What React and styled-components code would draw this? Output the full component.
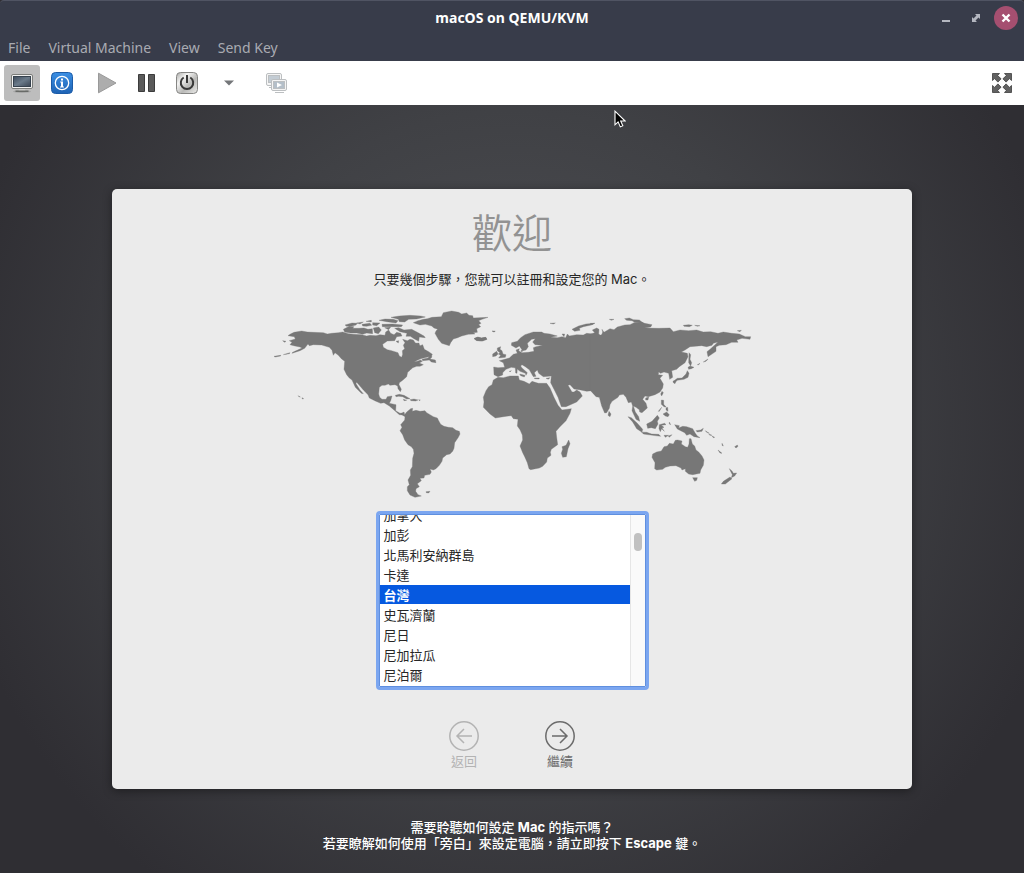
import React, { useLayoutEffect, useRef, useState } from "react";
import styled, { createGlobalStyle, css } from "styled-components";

const regions = [
  "加拿大",
  "加彭",
  "北馬利安納群島",
  "卡達",
  "台灣",
  "史瓦濟蘭",
  "尼日",
  "尼加拉瓜",
  "尼泊爾",
];

const menus = ["File", "Virtual Machine", "View", "Send Key"];

const MonitorIcon = () => (
  <svg width="24" height="24" viewBox="0 0 24 24">
    <defs>
      <linearGradient id="screen" x1="0" y1="0" x2="1" y2="1">
        <stop offset="0" stopColor="#3d4a5a" />
        <stop offset=".5" stopColor="#6b7b8a" />
        <stop offset="1" stopColor="#3b4654" />
      </linearGradient>
    </defs>
    <ellipse cx="12" cy="20.500" rx="9" ry="1.500" fill="#a5a5a5" />
    <rect x="1.500" y="3.500" width="21" height="14" rx="1.500" fill="#f1f1f0" stroke="#7b7d7a" />
    <rect x="3.500" y="5.500" width="17" height="10" fill="url(#screen)" stroke="#36424e" />
    <path d="M9 18h6l.5 2h-7z" fill="#c9cac8" />
    <path d="M5.500 19.500h13v1.500h-13z" fill="#686a67" />
  </svg>
);

const InfoIcon = () => (
  <svg width="24" height="24" viewBox="0 0 24 24">
    <defs>
      <linearGradient id="info" x1="0" y1="0" x2="0" y2="1">
        <stop offset="0" stopColor="#3b8fe4" />
        <stop offset="1" stopColor="#1e63b4" />
      </linearGradient>
    </defs>
    <rect x="1.500" y="1.500" width="21" height="21" rx="4" fill="url(#info)" stroke="#1c5ca8" />
    <circle cx="12" cy="12" r="6.700" fill="none" stroke="#fff" strokeWidth="1.300" />
    <path d="M11 7.500h2v2h-2zM10.200 10.500H13v5h1v1h-4v-1h1v-4h-.8z" fill="#fff" />
  </svg>
);

const PlayIcon = () => (
  <svg width="24" height="24" viewBox="0 0 24 24">
    <path d="M3.500 2.200 21 12 3.500 21.800z" fill="#adadad" stroke="#999" />
  </svg>
);

const PauseIcon = () => (
  <svg width="24" height="24" viewBox="0 0 24 24">
    <g fill="#5a5a5a" stroke="#3c3c3c">
      <path d="M3.500 3.500h6v17h-6zM13.500 3.500h6v17h-6z" />
    </g>
  </svg>
);

const PowerIcon = () => (
  <svg width="24" height="24" viewBox="0 0 24 24">
    <defs>
      <linearGradient id="metal" x1="0" y1="0" x2="1" y2="1">
        <stop offset="0" stopColor="#a9a9a7" />
        <stop offset=".3" stopColor="#f4f4f3" />
        <stop offset=".6" stopColor="#b9b9b7" />
        <stop offset="1" stopColor="#ececea" />
      </linearGradient>
    </defs>
    <rect x="1.500" y="1.500" width="21" height="21" rx="4" fill="url(#metal)" stroke="#868684" />
    <path d="M8.700 6.500A6.200 6.200 0 1 0 15.300 6.500" fill="none" stroke="#383838" strokeWidth="2" />
    <path d="M12 4v8" stroke="#383838" strokeWidth="2" />
  </svg>
);

const CaretIcon = () => (
  <svg width="10" height="6" viewBox="0 0 10 6">
    <path d="M0 .5h10L5 5.500z" fill="#747679" />
  </svg>
);

const ConsolesIcon = () => (
  <svg width="24" height="24" viewBox="0 0 24 24">
    <g stroke="#bcbfc1">
      <rect x="2.500" y="2.500" width="15" height="12" rx="1.500" fill="#f5f5f5" />
      <rect x="4.500" y="4.500" width="11" height="7" fill="#c3ccd4" />
      <path d="M5 16.500h5" />
      <rect x="7.500" y="8.500" width="15" height="11" rx="1.500" fill="#f5f5f5" />
      <rect x="9.500" y="10.500" width="11" height="7" fill="#b4bfc9" />
      <path d="M11 21.500h9" />
    </g>
    <path d="m13 11.500 5 2.500-5 2.500z" fill="#fff" />
  </svg>
);

const FullscreenIcon = () => (
  <svg width="24" height="24" viewBox="0 0 24 24">
    <defs>
      <path
        id="corner"
        d="M2.500 2.500h7L7.600 4.600l3.500 3.200-3.200 3.300-3.300-3.500-2.100 1.900z"
        fill="#626262"
        stroke="#3d3d3d"
        strokeWidth=".8"
      />
    </defs>
    <use href="#corner" />
    <use href="#corner" transform="matrix(-1 0 0 1 24 0)" />
    <use href="#corner" transform="matrix(1 0 0 -1 0 24)" />
    <use href="#corner" transform="matrix(-1 0 0 -1 24 24)" />
  </svg>
);

const PointerIcon = () => (
  <svg width="12" height="19" viewBox="0 0 12 19">
    <path
      d="M1 1.200v13.600l3.100-2.900 2.200 5 2.500-1.100-2.100-4.800h4.400z"
      fill="#000"
      stroke="#fff"
      strokeWidth="1.100"
    />
  </svg>
);

const ArrowIcon = ({ back }) => (
  <svg width="30" height="30" viewBox="0 0 30 30" fill="none" stroke="currentColor">
    <circle cx="15" cy="15" r="14.200" strokeWidth="1.500" />
    <path
      d={back ? "M23 15H8M15 8l-7 7 7 7" : "M7 15h15M15 8l7 7-7 7"}
      strokeWidth="1.500"
    />
  </svg>
);

const WorldMap = () => (
  <MapSvg viewBox="-18 0 1488 600" role="img" aria-hidden="true">
    {/* North and Central America */}
    <path d="M60 103 72 97 95 93 112 96 130 97 160 98 172 102 185 100 205 98 218 96 235 101 250 103 275 104 290 108 300 106 318 107 330 104 345 106 347 96 356 90 362 100 372 104 380 97 392 100 396 108 380 110 374 122 352 123 338 133 340 142 352 149 365 152 384 158 388 168 395 172 398 163 397 152 404 146 400 136 405 128 398 118 412 122 420 118 430 120 436 129 450 137 458 134 463 148 476 155 487 163 484 169 470 172 452 176 432 185 442 184 452 180 457 184 448 189 460 194 450 199 440 199 428 203 420 211 413 217 410 230 398 241 388 248 387 254 394 268 391 275 384 266 383 258 375 254 360 256 355 252 345 256 336 256 328 262 326 282 329 292 336 298 348 298 352 290 366 288 362 302 358 310 378 314 377 332 390 340 402 338 401 345 388 344 372 330 358 318 342 308 332 310 316 303 298 294 294 284 280 270 268 256 260 247 258 251 270 270 280 281 274 280 256 262 246 240 238 234 230 224 222 208 224 184 214 176 205 166 195 158 190 166 186 151 178 142 155 135 130 134 118 137 114 132 104 145 90 152 66 160 68 157 96 144 90 141 75 138 60 134 66 127 58 122 76 117 73 110 54 107z" />
    <path d="M12 169 32 166 32 168 15 171zM40 164 60 158 58 161zM38 122 48 124 44 127zM84 287 91 291 88 291zM96 293 101 296 97 297z" />
    {/* Canadian arctic */}
    <path d="M220 88 238 79 252 80 248 85 266 85 282 84 294 88 307 86 308 101 290 99 278 103 260 99 242 99 224 96zM225 75 246 69 262 70 258 75 246 78 230 79zM260 69 280 66 270 72zM276 73 300 70 305 76 290 79 278 78zM288 64 304 61 304 66zM308 68 330 69 320 77 308 75zM310 84 326 81 334 90 325 101 314 98zM327 61 345 57 370 58 384 62 378 69 350 65zM336 73 368 72 398 75 394 80 360 80 337 80zM344 83 362 81 356 89zM363 52 388 48 420 46 452 48 466 51 440 57 416 58 404 66 388 65 385 58zM374 85 386 83 402 90 425 88 442 97 462 108 466 113 448 111 446 124 432 116 421 109 408 109 411 100 390 95zM435 130 447 129 449 137 441 139zM378 124 386 122 385 129z" />
    <path d="M456 178 474 174 482 164 486 171 480 177 496 180 498 188 484 186 478 180 458 182zM376 286 388 283 402 286 420 296 410 297 398 290 386 289 378 290zM420 299 432 297 444 300 437 303 423 302zM400 298 410 301 402 302zM446 299 451 300 448 302z" />
    <g transform="translate(360 0)">
      <path d="M70 68 84 62 100 58 112 56 126 52 154 50 160 38 185 33 206 37 215 42 230 39 237 46 248 47 250 54 294 52 276 58 266 62 273 70 266 74 272 80 260 86 262 97 250 98 255 102 235 103 215 108 203 113 190 117 182 128 178 137 155 130 145 118 135 100 138 93 143 88 132 84 125 78 106 73 90 75z" />
      <path d="M252 116 262 112 275 114 286 112 291 118 278 123 260 122zM306 93 315 94 310 95z" />
    </g>
    {/* South America */}
    <g transform="translate(330 270)">
      <path d="M62 72 72 66 74 74 80 66 92 56 98 55 97 64 108 61 120 64 135 62 140 68 150 74 160 80 172 84 176 92 182 103 192 109 205 112 218 113 228 121 238 124 240 132 235 142 224 158 222 175 218 184 210 192 200 194 188 204 186 214 178 226 168 236 160 240 150 237 154 246 150 253 134 256 132 264 120 265 124 272 112 281 118 290 108 296 107 304 114 314 124 318 105 322 90 315 82 302 82 290 88 284 84 270 92 256 91 240 97 230 98 205 102 190 100 178 94 170 84 164 74 150 68 134 60 122 66 112 62 104 74 90 75 80z" />
      <path d="M138 305 150 304 146 309 139 308z" />
    </g>
    <g transform="translate(600 60)">
      {/* Africa */}
      <path d="M84 172 100 173 120 168 145 168 148 180 162 184 178 192 186 184 205 190 230 190 240 204 252 232 264 256 276 270 304 266 300 280 288 302 270 320 258 334 260 352 263 374 244 388 241 397 243 406 232 414 230 426 218 439 208 444 182 449 177 446 172 428 164 410 158 398 150 378 158 360 157 345 150 329 142 318 144 298 130 296 124 287 100 290 76 294 60 282 40 262 42 246 40 232 48 212 56 200 66 194 70 180z" />
      <path d="M296 360 300 371 294 386 289 410 278 412 274 400 278 388 276 380 288 376z" />
      {/* Europe and the Middle East */}
      <path d="M422 38 408 46 402 42 390 46 375 43 350 40 340 45 320 44 298 48 292 42 287 53 276 50 262 53 242 52 262 48 240 42 222 40 215 36 190 36 165 44 152 53 142 64 125 68 124 76 138 84 148 78 158 92 168 90 175 80 172 70 185 58 196 56 188 66 195 74 218 76 198 80 190 83 192 94 175 97 156 98 146 92 148 86 138 90 142 100 130 103 118 114 104 118 88 122 100 128 104 142 84 143 71 141 72 164 84 170 98 165 98 158 108 148 124 142 138 144 150 154 166 160 168 166 172 158 156 144 152 138 156 134 166 140 178 149 184 160 190 170 198 169 193 158 202 150 206 160 220 170 244 168 242 188 252 208 264 232 274 260 288 260 320 246 337 228 330 216 320 210 312 216 306 216 294 196 300 194 312 207 328 209 350 214 365 212 373 222 385 230 422 230z" />
      <path d="M82 84 92 80 90 88 96 92 99 102 108 104 106 112 86 114 92 106 85 102 90 98 82 92zM68 102 80 94 84 102 78 108 68 110zM136 144 142 143 141 160 137 159zM149 162 165 166 163 171 152 167zM193 174 208 174 207 177 194 176zM228 175 240 173 235 178zM153 90 159 92 155 96zM118 154 124 152 120 156z" />
      <path d="M306 28 326 18 348 12 374 10 364 15 340 20 328 25 330 31 314 34zM13 55 24 51 34 54 48 52 50 58 34 63 20 61zM276 42 284 42 282 50zM68 34 76 34 72 36zM240 10 256 9 250 12z" />
    </g>
    <g transform="translate(960 30)">
      {/* Asia */}
      <path d="M0 73 14 68 7 60 20 54 27 58 26 72 34 78 38 66 36 58 42 67 60 56 72 59 82 51 104 45 120 44 132 38 155 36 164 40 186 44 182 51 164 54 206 55 240 54 250 65 270 60 296 62 320 60 340 66 362 65 384 70 400 66 425 70 448 72 466 80 482 80 480 88 456 85 440 90 444 97 425 97 408 104 388 106 378 110 378 124 366 132 354 140 351 125 362 116 384 96 370 100 366 106 350 110 335 107 300 110 285 120 274 126 292 130 294 140 285 158 268 170 260 178 245 182 248 202 239 208 236 190 222 186 212 190 206 186 205 194 218 196 210 205 220 222 218 234 210 246 195 254 175 260 165 258 158 268 168 280 172 294 156 308 149 306 148 299 138 292 130 288 136 306 146 320 149 334 138 328 126 302 128 288 124 276 115 278 108 262 100 253 88 255 84 262 66 274 60 284 58 295 50 308 44 309 35 288 28 262 18 260 0 240z" />
      <path d="M57 304 63 312 60 320 54 316zM216 244 220 248 215 258 212 252zM167 264 176 261 174 270 167 270zM297 128 302 134 300 148 305 158 302 168 296 158zM294 172 300 168 312 172 304 176 296 178zM292 182 297 190 294 202 282 208 262 211 256 216 250 214 262 205 276 204 288 192zM249 213 258 213 255 221 250 218zM322 164 330 160 326 164zM340 156 354 147 348 154z" />
      <path d="M104 26 118 24 130 29 148 30 160 40 134 37 126 32 110 31zM280 46 296 44 307 46 298 50 282 49zM314 46 330 47 322 49zM442 62 454 61 450 65zM0 40 14 40 6 44zM58 28 72 28 64 31z" />
      {/* South-east Asia */}
      <path d="M114 320 124 323 142 340 158 358 156 367 140 356 128 336zM155 366 170 367 185 372 206 373 212 379 188 376 160 372zM170 342 186 334 202 316 208 324 202 334 204 342 196 356 184 353 173 355zM208 344 224 340 228 344 214 346 222 352 216 354 223 364 215 356 211 365 207 356zM214 270 221 271 221 283 229 292 222 290 214 283zM228 294 233 292 234 304 228 300zM219 312 230 306 238 314 234 320 226 318zM205 304 215 292 208 304zM238 336 242 344 238 342zM222 376 236 376 226 382zM235 378 246 374 238 382z" />
      <path d="M254 344 268 347 266 354 278 349 290 350 308 356 316 370 322 378 330 383 312 380 300 372 290 376 284 368 272 362 262 357zM318 362 332 360 340 355 336 364 322 366zM346 362 358 370 350 367zM356 372 366 376 360 376zM366 378 374 382 370 383zM384 420 396 430 390 429zM396 400 400 408 396 406zM434 410 442 405 444 409 438 414z" />
      {/* Australia and New Zealand */}
      <path d="M188 432 200 426 214 423 222 410 232 408 238 400 250 402 256 391 263 390 276 393 274 402 286 410 293 412 297 402 298 386 303 386 307 402 314 408 318 420 326 426 336 438 342 450 340 466 332 480 330 490 308 494 296 492 286 484 286 476 276 480 273 474 258 467 240 468 226 472 218 478 200 480 194 476 195 458 186 442zM308 503 322 503 320 511 314 514zM418 476 426 483 430 490 440 489 434 498 424 503 427 494zM420 501 426 506 406 522 394 522 400 514z" />
    </g>
  </MapSvg>
);

const App = () => {
  const [region, setRegion] = useState("台灣");
  const list = useRef(null);

  useLayoutEffect(() => {
    list.current.scrollTop = 10;
    const frame = requestAnimationFrame(() => {
      if (list.current) list.current.scrollTop = 10;
    });
    return () => cancelAnimationFrame(frame);
  }, []);

  return (
    <Window>
      <GlobalStyle />
      <Header>
        <TitleBar>
          <Title>macOS on QEMU/KVM</Title>
          <Controls>
            <Control aria-label="Minimize">
              <svg width="10" height="10" viewBox="0 0 10 10">
                <path d="M1 7h8v2H1z" fill="currentColor" />
              </svg>
            </Control>
            <Control aria-label="Maximize">
              <svg width="10" height="10" viewBox="0 0 10 10">
                <path
                  d="M4 1h5v5L7.500 4.500 6 6 4 4l1.500-1.500zM1 4l1.500 1.500L4 4l2 2-1.500 1.500L6 9H1z"
                  fill="currentColor"
                />
              </svg>
            </Control>
            <Control $close aria-label="Close">
              <svg width="10" height="10" viewBox="0 0 10 10">
                <path d="m1.500 1.500 7 7m0-7-7 7" stroke="currentColor" strokeWidth="2.400" />
              </svg>
            </Control>
          </Controls>
        </TitleBar>
        <MenuBar>
          {menus.map((menu) => (
            <MenuItem key={menu}>{menu}</MenuItem>
          ))}
        </MenuBar>
      </Header>

      <Toolbar>
        <Tool $active aria-label="Console">
          <MonitorIcon />
        </Tool>
        <Tool aria-label="Details">
          <InfoIcon />
        </Tool>
        <Divider />
        <Tool aria-label="Run">
          <PlayIcon />
        </Tool>
        <Tool aria-label="Pause">
          <PauseIcon />
        </Tool>
        <Tool aria-label="Shut down">
          <PowerIcon />
        </Tool>
        <Tool $wide aria-label="Shutdown menu">
          <CaretIcon />
        </Tool>
        <Divider />
        <Tool aria-label="Snapshots">
          <ConsolesIcon />
        </Tool>
        <Spacer />
        <Tool aria-label="Fullscreen">
          <FullscreenIcon />
        </Tool>
      </Toolbar>

      <Screen>
        <Pointer>
          <PointerIcon />
        </Pointer>
        <Card>
          <Welcome>歡迎</Welcome>
          <Intro id="intro">只要幾個步驟，您就可以註冊和設定您的 Mac。</Intro>
          <WorldMap />
          <ListFrame>
            <RegionList
              ref={list}
              size={9}
              value={region}
              aria-labelledby="intro"
              onChange={(e) => setRegion(e.target.value)}
            >
              {regions.map((name) => (
                <option key={name} value={name}>
                  {name}
                </option>
              ))}
            </RegionList>
            <Track>
              <Thumb />
            </Track>
          </ListFrame>
          <Nav>
            <NavButton disabled>
              <ArrowIcon back />
              返回
            </NavButton>
            <NavButton>
              <ArrowIcon />
              繼續
            </NavButton>
          </Nav>
        </Card>
        <Hint>
          需要聆聽如何設定 <b>Mac</b> 的指示嗎？
          <br />
          若要瞭解如何使用「旁白」來設定電腦，請立即按下 <b>Escape</b> 鍵。
        </Hint>
      </Screen>
    </Window>
  );
};

export default App;

const GlobalStyle = createGlobalStyle`
  * {
    box-sizing: border-box;
  }
  body {
    margin: 0;
    background: #2f2e33;
  }
  button {
    border: 0;
    padding: 0;
    background: none;
    font: inherit;
    color: inherit;
  }
  svg {
    display: block;
    flex: none;
  }
`;

const Window = styled.div`
  min-height: 100vh;
  display: flex;
  flex-direction: column;
  font-family: "Noto Sans", "Open Sans", sans-serif;
`;

const Header = styled.header`
  background: #383c4a;
  border-top: 1px solid #505463;
  border-radius: 4px 4px 0 0;
`;

const TitleBar = styled.div`
  height: 34px;
  padding: 0 6px;
  display: grid;
  grid-template-columns: 1fr auto 1fr;
  align-items: center;
`;

const Title = styled.h1`
  grid-column: 2;
  margin: 0;
  font-size: 14px;
  font-weight: 700;
  line-height: 20px;
  color: #ffffff;
`;

const Controls = styled.div`
  display: flex;
  justify-content: flex-end;
  gap: 6px;
`;

const Control = styled.button`
  width: 24px;
  height: 24px;
  display: flex;
  align-items: center;
  justify-content: center;
  border-radius: 50%;
  color: #b4b7c0;
  ${({ $close }) =>
    $close &&
    css`
      background: #a54f70;
      color: #ffffff;
    `}
`;

const MenuBar = styled.nav`
  height: 26px;
  padding: 0 8px;
  display: flex;
  align-items: center;
  gap: 18px;
`;

const MenuItem = styled.button`
  font-size: 14px;
  line-height: 20px;
  color: #a9abb2;
`;

const Toolbar = styled.div`
  height: 44px;
  padding: 0 4px;
  display: flex;
  align-items: center;
  gap: 4px;
  background: #ffffff;
`;

const Tool = styled.button`
  width: ${({ $wide }) => ($wide ? "40px" : "36px")};
  height: 36px;
  display: flex;
  align-items: center;
  justify-content: center;
  border-radius: 3px;
  background: ${({ $active }) => ($active ? "#bdbdbd" : "transparent")};
`;

const Divider = styled.span`
  width: 1px;
`;

const Spacer = styled.span`
  flex: 1;
`;

const Screen = styled.main`
  position: relative;
  flex: 1;
  padding: 84px 16px 20px;
  font-family: Inter, "Noto Sans CJK TC", sans-serif;
  font-size: 13px;
  background: radial-gradient(ellipse 56% 75% at 50% 42%, #505156 0%, #404145 55%, #2f2e33 100%);
`;

const Pointer = styled.span`
  position: absolute;
  top: 5px;
  left: 60%;
`;

const Card = styled.section`
  max-width: 800px;
  margin: 0 auto;
  padding: 21px 16px 18px;
  display: flex;
  flex-direction: column;
  align-items: center;
  border-radius: 5px;
  background: #ebebeb;
  box-shadow: 0 2px 10px rgba(0, 0, 0, 0.4);
`;

const Welcome = styled.h2`
  margin: 0;
  font-size: 40px;
  font-weight: 350;
  line-height: 48px;
  color: #929292;
`;

const Intro = styled.p`
  margin: 11px 0;
  line-height: 20px;
  color: #262626;
`;

const MapSvg = styled.svg`
  width: 100%;
  max-width: 496px;
  fill: #777777;
  stroke: #777777;
  stroke-width: 1;
  stroke-linejoin: round;
`;

const ListFrame = styled.div`
  width: 273px;
  height: 179px;
  margin-top: 11px;
  display: flex;
  border: 3px solid #7ba6f0;
  border-radius: 4px;
  outline: 1px solid #5f8fdf;
  outline-offset: -4px;
  padding: 1px;
  background: #ffffff;
`;

const RegionList = styled.select`
  flex: 1;
  min-width: 0;
  height: 100%;
  margin: 0;
  padding: 0 0 4px;
  border: 0;
  outline: 0;
  background: #ffffff;
  color: #262626;
  font: inherit;
  scrollbar-width: none;

  option {
    min-height: 20px;
    height: 20px;
    padding: 0 4px;
    line-height: 18px;
  }

  option:checked {
    background: linear-gradient(#0659e0, #0659e0) 0 0 / 100% 19px no-repeat;
    color: #ffffff;
    -webkit-text-fill-color: #ffffff;
    font-weight: 700;
  }
`;

const Track = styled.div`
  width: 15px;
  padding: 18px 3px 0;
  border-left: 1px solid #e6e6e6;
  background: #fafafa;
`;

const Thumb = styled.div`
  width: 8px;
  height: 18px;
  border-radius: 4px;
  background: #c1c1c1;
`;

const Nav = styled.div`
  margin-top: 31px;
  display: flex;
  gap: 32px;
`;

const NavButton = styled.button`
  width: 64px;
  display: flex;
  flex-direction: column;
  align-items: center;
  line-height: 20px;
  color: #6b6b6b;

  &:disabled {
    color: #b3b3b3;
  }
`;

const Hint = styled.p`
  margin: 30px 0 0;
  font-weight: 500;
  line-height: 16px;
  text-align: center;
  color: #ffffff;

  b {
    font-weight: 700;
  }
`;
